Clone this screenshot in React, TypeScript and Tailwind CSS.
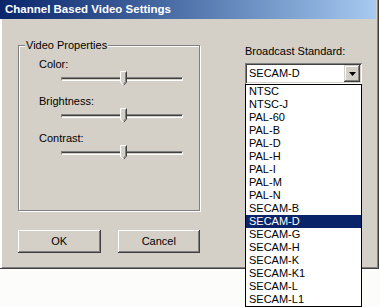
const standards = [
  'NTSC',
  'NTSC-J',
  'PAL-60',
  'PAL-B',
  'PAL-D',
  'PAL-H',
  'PAL-I',
  'PAL-M',
  'PAL-N',
  'SECAM-B',
  'SECAM-D',
  'SECAM-G',
  'SECAM-H',
  'SECAM-K',
  'SECAM-K1',
  'SECAM-L',
  'SECAM-L1',
];

function Thumb() {
  return (
    <svg width="8" height="16" viewBox="0 0 8 16" className="block">
      <path d="M0.5 0.5 H6.5 V11 L3.5 14.5 L0.5 11 Z" fill="#d4d0c8" />
      <path d="M0.5 11 V0.5 H6.5" fill="none" stroke="#ffffff" />
      <path d="M6.5 0.5 V11 L3.5 14.5" fill="none" stroke="#404040" />
      <path d="M5.5 1.5 V10.6 L3.5 13" fill="none" stroke="#808080" />
      <path d="M0.5 11 L3.5 14.5" fill="none" stroke="#ffffff" />
    </svg>
  );
}

function Slider({ label }: { label: string }) {
  return (
    <div className="flex flex-col">
      <div className="pl-[20px] h-[13px] leading-[13px]">{label}</div>
      <div className="relative ml-[42px] w-[122px] h-[16px]">
        <div className="absolute left-0 right-0 top-[6px] h-[4px] border-t border-l border-t-[#808080] border-l-[#808080] border-b border-r border-b-white border-r-white">
          <div className="h-[1px] bg-[#404040]" />
        </div>
        <div className="absolute left-[59px] top-0">
          <Thumb />
        </div>
      </div>
    </div>
  );
}

function Button({ children }: { children: string }) {
  return (
    <div className="w-[87px] h-[23px] flex items-center justify-center bg-[#d4d0c8] shadow-[inset_-1px_-1px_0_#404040,inset_1px_1px_0_#ffffff,inset_-2px_-2px_0_#808080]">
      {children}
    </div>
  );
}

export default function App() {
  return (
    <div
      className="w-[380px] h-[307px] bg-[#fcfdfb] text-black text-[11px] overflow-hidden"
      style={{ fontFamily: '"Liberation Sans", Arial, sans-serif' }}
    >
      <div className="w-[379px] h-[269px] bg-[#d4d0c8] flex flex-col shadow-[inset_-1px_-1px_0_#404040,inset_2px_0_0_#ffffff,inset_-2px_-2px_0_#808080]">
        <div className="h-[19px] mr-[3px] flex items-center pl-[5px] bg-gradient-to-r from-[#0a246a] to-[#a6caf0]">
          <span className="text-white font-bold text-[11.5px] leading-none">Channel Based Video Settings</span>
        </div>
        <div className="flex flex-row pl-[18px]">
          <div className="w-[182px] flex flex-col">
            <fieldset className="mt-[20px] h-[172px] border border-[#808080] shadow-[1px_1px_0_#ffffff,inset_1px_1px_0_#ffffff]">
              <legend className="ml-[6px] px-[1px] h-[13px] leading-[13px] bg-[#d4d0c8]">Video Properties</legend>
              <div className="flex flex-col gap-[8px] mt-[6px]">
                <Slider label="Color:" />
                <Slider label="Brightness:" />
                <Slider label="Contrast:" />
              </div>
            </fieldset>
            <div className="flex flex-row gap-[17px] mt-[19px]">
              <Button>OK</Button>
              <Button>Cancel</Button>
            </div>
          </div>
          <div className="ml-[45px] w-[117px] flex flex-col">
            <div className="mt-[26px] h-[13px] leading-[13px] whitespace-nowrap">Broadcast Standard:</div>
            <div className="relative mt-[5px]">
              <div className="h-[21px] bg-white flex items-center shadow-[inset_1px_1px_0_#808080,inset_-1px_-1px_0_#ffffff,inset_2px_2px_0_#404040,inset_-2px_-2px_0_#d4d0c8]">
                <span className="pl-[4px] flex-1">SECAM-D</span>
                <div className="w-[16px] h-[17px] mr-[2px] bg-[#d4d0c8] flex items-center justify-center shadow-[inset_-1px_-1px_0_#404040,inset_1px_1px_0_#d4d0c8,inset_-2px_-2px_0_#808080,inset_2px_2px_0_#ffffff]">
                  <svg width="7" height="4" viewBox="0 0 7 4">
                    <path d="M0 0 H7 L3.5 4 Z" fill="#000" />
                  </svg>
                </div>
              </div>
              <div className="absolute left-0 top-full w-[117px] h-[223px] bg-white border border-black z-10">
                {standards.map((s) => (
                  <div
                    key={s}
                    className={
                      'h-[13px] leading-[13px] pl-[3px] ' +
                      (s === 'SECAM-D' ? 'bg-[#0a246a] text-white' : '')
                    }
                  >
                    {s}
                  </div>
                ))}
              </div>
            </div>
          </div>
        </div>
      </div>
    </div>
  );
}
